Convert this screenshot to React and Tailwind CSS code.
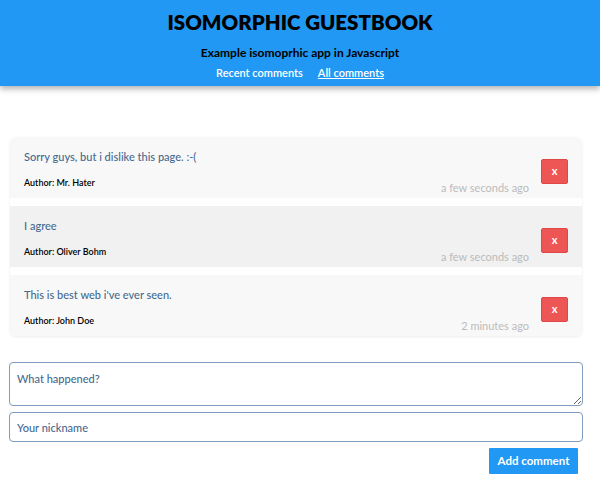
const comments = [
  { id: 1, text: "Sorry guys, but i dislike this page. :-(", author: "Mr. Hater", time: "a few seconds ago" },
  { id: 2, text: "I agree", author: "Oliver Bohm", time: "a few seconds ago" },
  { id: 3, text: "This is best web i've ever seen.", author: "John Doe", time: "2 minutes ago" },
];

export default function App() {
  return (
    <div className="min-h-screen bg-white font-['Lato',sans-serif]">
      {/* header */}
      <header className="h-[86px] bg-[#2098f4] shadow-[0_3px_6px_rgba(0,0,0,0.3)] flex flex-col items-center pt-[9px]">
        <h1 className="text-[20.5px] leading-[26px] font-extrabold text-black">ISOMORPHIC GUESTBOOK</h1>
        <p className="mt-[10px] text-[12px] leading-[15px] font-bold text-black">Example isomoprhic app in Javascript</p>
        <nav className="mt-[5px] flex gap-[15px] text-[11px] leading-[15px] font-semibold text-white">
          <a href="#">Recent comments</a>
          <a href="#" className="underline">All comments</a>
        </nav>
      </header>

      {/* comments */}
      <ul className="mx-[10px] mt-[51px] w-[572px] rounded-[6px] shadow-[0_1px_3px_rgba(0,0,0,0.08)] flex flex-col gap-[8px]">
        {comments.map((c, i) => (
          <li
            key={c.id}
            className={`h-[61px] flex items-start justify-between pl-[14px] pr-[14px] ${i === 1 ? "bg-[#f1f1f1]" : "bg-[#f8f8f8]"} ${i === 0 ? "rounded-t-[6px]" : ""} ${i === 2 ? "rounded-b-[6px]" : ""}`}
          >
            <div className="flex flex-col pt-[13px]">
              <span className="text-[11px] leading-[14px] font-medium text-[#466a8e]">{c.text}</span>
              <span className="mt-[13px] text-[9px] leading-[11px] font-semibold text-black">Author: {c.author}</span>
            </div>
            <div className="flex items-center gap-[12px] pt-[22px]">
              <span className="self-end mb-[-11px] text-[11px] leading-[14px] text-[#bbbbbb]">{c.time}</span>
              <button className="w-[27px] h-[25px] bg-[#ee5555] text-white text-[11px] font-bold rounded-[2px] border border-[#e04848]">x</button>
            </div>
          </li>
        ))}
      </ul>

      {/* form */}
      <form className="ml-[9px] mt-[26px] w-[574px] flex flex-col">
        <textarea
          placeholder="What happened?"
          className="h-[44px] w-full rounded-[4px] border border-[#7f9bbd] px-[7px] py-[9px] text-[11px] leading-[14px] font-medium text-[#466a8e] placeholder:text-[#466a8e] outline-none resize-y"
        />
        <input
          placeholder="Your nickname"
          className="mt-[6px] h-[30px] w-full rounded-[4px] border border-[#7f9bbd] px-[7px] text-[11px] font-medium text-[#466a8e] placeholder:text-[#466a8e] outline-none"
        />
        <div className="mt-[6px] flex justify-end pr-[5px]">
          <button type="button" className="h-[26px] w-[89px] bg-[#2098f4] text-white text-[11.5px] font-bold rounded-[1px]">Add comment</button>
        </div>
      </form>
    </div>
  );
}
